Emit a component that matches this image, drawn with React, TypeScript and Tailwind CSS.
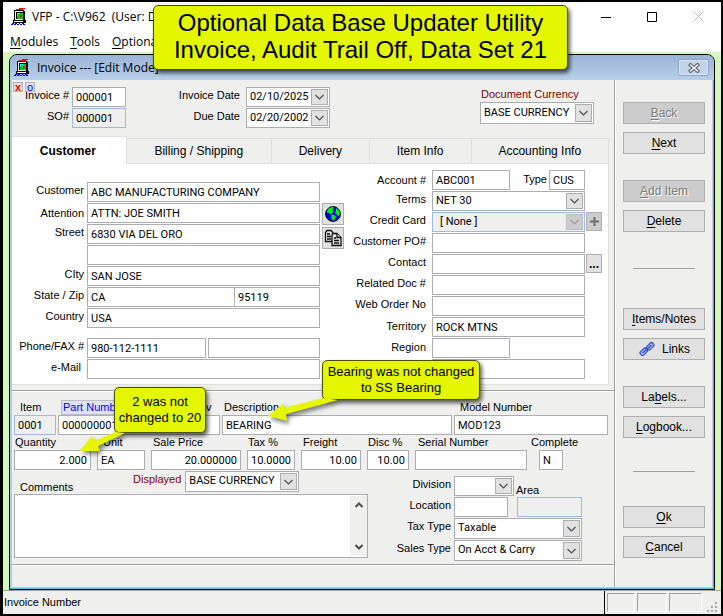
import type { ReactNode } from 'react';

const yellow = 'absolute z-20 rounded-[5px] border border-[#4a4f10] bg-[#e4f600] text-center text-black shadow-[2px_3px_4px_rgba(0,0,0,0.65)]';
const box = 'h-5 min-w-0 border border-[#abadb3] bg-white px-[3px] font-[Roboto,sans-serif] text-[11px] text-black outline-none';
const locked = 'h-5 min-w-0 border border-[#9db9e4] bg-[#efefed] px-[3px] font-[Roboto,sans-serif] text-[11px] text-black outline-none';

function AppIcon() {
  return (
    <svg width="16" height="17" viewBox="0 0 16 17" shapeRendering="crispEdges" className="shrink-0">
      <path d="M8 0h6v1H8zM5 1h7v1H5z" fill="#f00" />
      <path d="M3 2h10v1h1v9h1v3H2v-3h1z" fill="#000" />
      <path d="M4 3h8v1H5v8H4zM3 13h9v1H3z" fill="#fff" />
      <rect x="6" y="5" width="6" height="6" fill="#00c800" />
      <path d="M6 5h3v1H7v2H6z" fill="#0ff" />
      <rect x="9" y="7" width="2" height="2" fill="#f00" />
      <path d="M5 11h7v1H5z" fill="#fff" />
      <path d="M1 15h2v1H1zM4 15h2v1H4zM8 15h1v1H8zM11 15h2v1h-2zM0 16h2v1H0zM3 16h2v1H3zM6 16h2v1H6zM9 16h2v1H9zM12 16h2v1h-2z" fill="#00f" />
    </svg>
  );
}

function Chevron({ off = false }: { off?: boolean }) {
  return (
    <span
      className={
        off
          ? 'pointer-events-none absolute inset-y-0.5 right-0.5 flex w-[17px] items-center justify-center border border-[#bfbfbf] bg-[#cccccc] text-[#9a9a9a]'
          : 'pointer-events-none absolute inset-y-0.5 right-0.5 flex w-[17px] items-center justify-center border border-[#adadad] bg-[#e1e1e1] text-[#505050]'
      }
    >
      <svg width="9" height="6" viewBox="0 0 9 6" fill="none" stroke="currentColor" strokeWidth="1.2">
        <path d="M0.5 1l4 4 4-4" />
      </svg>
    </span>
  );
}

type PickProps = { id: string; value: string; className?: string; off?: boolean };

function Pick({ id, value, className = '', off = false }: PickProps) {
  return (
    <div className={'relative min-w-0 ' + className}>
      <select
        id={id}
        disabled={off}
        className={
          off
            ? 'h-full w-full appearance-none border border-[#9db9e4] bg-[#efefed] pl-[7px] font-[Roboto,sans-serif] text-[11px] text-black opacity-100 outline-none'
            : 'h-full w-full appearance-none border border-[#abadb3] bg-white pl-[3px] font-[Roboto,sans-serif] text-[11px] text-black outline-none'
        }
      >
        <option>{value}</option>
      </select>
      <Chevron off={off} />
    </div>
  );
}

type RowProps = { id: string; label: string; labelClass: string; children: ReactNode };

function Row({ id, label, labelClass, children }: RowProps) {
  return (
    <div className="flex h-[21px] items-start">
      <label htmlFor={id} className={'shrink-0 text-right leading-4 whitespace-nowrap ' + labelClass}>
        {label}
      </label>
      {children}
    </div>
  );
}

type FieldProps = { id: string; label: string; value: string; col: string; input?: string; labelClass?: string };

function Field({ id, label, value, col, input = '', labelClass = 'pl-0.5' }: FieldProps) {
  return (
    <div className={'flex min-w-0 flex-col ' + col}>
      <label htmlFor={id} className={'leading-[15px] whitespace-nowrap ' + labelClass}>
        {label}
      </label>
      <input id={id} defaultValue={value} className={box + ' w-full ' + input} />
    </div>
  );
}

type SideProps = { before?: string; hot: string; after: string; off?: boolean; className?: string; icon?: ReactNode };

function SideButton({ before = '', hot, after, off = false, className = '', icon }: SideProps) {
  return (
    <button
      type="button"
      disabled={off}
      className={
        'flex h-[22px] w-full items-center justify-center border text-xs whitespace-nowrap ' +
        (off
          ? 'border-[#b0b0b4] bg-[#cccccc] text-[#7b7b7b] [text-shadow:1px_1px_0_#fff] '
          : 'border-[#adadb2] bg-[#e1e1e1] text-black ') +
        className
      }
    >
      {icon}
      <span>
        {before}
        <span className="underline underline-offset-2">{hot}</span>
        {after}
      </span>
    </button>
  );
}

function TitleBar() {
  return (
    <header className="bg-white font-['Open_Sans',sans-serif] text-xs">
      <div className="flex h-[29px] items-center pr-[17px] pl-2">
        <AppIcon />
        <span className="ml-[5px] flex-1 whitespace-pre">VFP - C:\V962  (User: DO</span>
        <button type="button" aria-label="Minimize" className="mr-9">
          <svg width="10" height="10" viewBox="0 0 10 10" stroke="#000">
            <path d="M0 5.5h10" />
          </svg>
        </button>
        <button type="button" aria-label="Maximize" className="mr-9">
          <svg width="10" height="10" viewBox="0 0 10 10" fill="none" stroke="#000">
            <path d="M0.5 0.5h9v9h-9z" />
          </svg>
        </button>
        <button type="button" aria-label="Close">
          <svg width="11" height="11" viewBox="0 0 11 11" stroke="#bbb">
            <path d="M0.5 0.5l10 10M10.5 0.5l-10 10" />
          </svg>
        </button>
      </div>
      <nav className="flex h-[21px] items-center gap-3 pl-[7px]">
        {['Modules', 'Tools', 'Optional'].map((item) => (
          <button type="button" key={item}>
            <span className="underline underline-offset-2">{item[0]}</span>
            {item.slice(1)}
          </button>
        ))}
      </nav>
    </header>
  );
}

function DocumentHeader() {
  return (
    <div className="relative flex h-14 items-start pt-[7px]">
      <button type="button" className="absolute top-0.5 left-px h-2.5 w-2.5 border border-[#b4b4b8] bg-[#e1e1e1] text-[11px] leading-[7px] font-bold text-red-600">
        x
      </button>
      <button type="button" className="absolute top-0.5 left-[13px] h-2.5 w-2.5 border border-[#b4b4b8] bg-[#e1e1e1] text-[11px] leading-[7px] text-[#0000ff]">
        o
      </button>
      <div>
        <Row id="invoice" label="Invoice #" labelClass="w-[57px] mr-[3px]">
          <input id="invoice" autoFocus defaultValue="000001" className={box + ' w-[54px]'} />
        </Row>
        <Row id="so" label="SO#" labelClass="w-[57px] mr-[3px]">
          <input id="so" readOnly defaultValue="000001" className={locked + ' w-[54px]'} />
        </Row>
      </div>
      <div className="ml-12">
        <Row id="invdate" label="Invoice Date" labelClass="w-[66px] mr-1.5">
          <Pick id="invdate" value="02/10/2025" className="h-5 w-[84px]" />
        </Row>
        <Row id="duedate" label="Due Date" labelClass="w-[66px] mr-1.5">
          <Pick id="duedate" value="02/20/2002" className="h-5 w-[84px]" />
        </Row>
      </div>
      <div className="mr-5 ml-auto flex w-[114px] flex-col">
        <label htmlFor="currency" className="pl-px leading-[15px] whitespace-nowrap text-[#800000]">
          Document Currency
        </label>
        <Pick id="currency" value="BASE CURRENCY" className="h-[22px]" />
      </div>
    </div>
  );
}

function Tabs() {
  const tab = 'h-[26px] min-w-0 border-t border-r border-b border-[#dfdfdf] bg-[#efefed] text-xs whitespace-nowrap';
  return (
    <div role="tablist" className="mr-[5px] flex items-end">
      <button type="button" role="tab" aria-selected="true" className="h-7 min-w-0 flex-[113] border-t border-r border-[#dfdfdf] bg-white pr-0.5 text-xs font-bold">
        Customer
      </button>
      <button type="button" role="tab" aria-selected="false" className={tab + ' flex-[146]'}>Billing / Shipping</button>
      <button type="button" role="tab" aria-selected="false" className={tab + ' flex-[98]'}>Delivery</button>
      <button type="button" role="tab" aria-selected="false" className={tab + ' flex-[102]'}>Item Info</button>
      <button type="button" role="tab" aria-selected="false" className={tab + ' flex-[138]'}>Accounting Info</button>
    </div>
  );
}

function CustomerPanel() {
  const left = 'w-[72px] mr-[3px]';
  const right = 'w-[82px] mr-1.5';
  const small = 'flex items-center justify-center border border-[#adadb2] bg-[#e1e1e1]';
  return (
    <div className="mr-[5px] flex h-[221px] items-start border-r border-b border-[#dfdfdf] bg-white">
      <div className="min-w-0 flex-1 pt-[18px]">
        <Row id="customer" label="Customer" labelClass={left}>
          <input id="customer" defaultValue="ABC MANUFACTURING COMPANY" className={box + ' flex-1'} />
        </Row>
        <Row id="attention" label="Attention" labelClass={left + ' pt-0.5'}>
          <input id="attention" defaultValue="ATTN: JOE SMITH" className={box + ' flex-1'} />
        </Row>
        <Row id="street" label="Street" labelClass={left}>
          <input id="street" defaultValue="6830 VIA DEL ORO" className={box + ' flex-1'} />
        </Row>
        <Row id="street2" label="" labelClass={left}>
          <input id="street2" aria-label="Street line 2" className={box + ' flex-1'} />
        </Row>
        <Row id="city" label="CIty" labelClass={left}>
          <input id="city" defaultValue="SAN JOSE" className={box + ' flex-1'} />
        </Row>
        <Row id="state" label="State / Zip" labelClass={left}>
          <input id="state" defaultValue="CA" className={box + ' flex-1'} />
          <input aria-label="Zip" defaultValue="95119" className={box + ' -ml-px w-[86px]'} />
        </Row>
        <Row id="country" label="Country" labelClass={left}>
          <input id="country" defaultValue="USA" className={box + ' flex-1'} />
        </Row>
        <div className="mt-[9px]">
          <Row id="phone" label="Phone/FAX #" labelClass={left}>
            <input id="phone" defaultValue="980-112-1111" className={box + ' mr-0.5 flex-1'} />
            <input aria-label="Fax" className={box + ' w-28'} />
          </Row>
        </div>
        <Row id="email" label="e-Mail" labelClass={left + ' pr-[3px]'}>
          <input id="email" className={box + ' flex-1'} />
        </Row>
      </div>
      <div className="ml-0.5 flex w-[22px] flex-col gap-0.5 pt-[39px]">
        <button type="button" aria-label="Web site" className={small + ' h-[22px]'}>
          <svg width="16" height="16" viewBox="0 0 16 16">
            <circle cx="8" cy="8" r="7.4" fill="#0000f0" stroke="#000" />
            <path d="M2 5l2-3 4-1.2 1 1.200-2 2 2 1-2 2-1 2-2-2-2-.5zM11 2l3 2.500 1 3.500-1 2-2-1-2-2 1-2zM6 8.500l3 .5 2 1.500-1 2.500-2 2-1.500-3z" fill="#00f000" />
          </svg>
        </button>
        <button type="button" aria-label="Copy" className={small + ' h-[22px]'}>
          <svg width="18" height="18" viewBox="0 0 18 18" fill="#e1e1e1" stroke="#111" strokeWidth="1.3">
            <path d="M3 1.5h4l2 2v9H1.500v-9z" />
            <path d="M3 5h3M3 7.500h4M3 10h4" />
            <path d="M9 4.500h4l4 4v8H8v-11z" />
            <path d="M13 4.500v4h4M10 9h2M10 11.500h5M10 14h5" />
          </svg>
        </button>
      </div>
      <div className="w-[264px] shrink-0 pt-1.5">
        <Row id="account" label="Account #" labelClass={right + ' pt-0.5'}>
          <input id="account" defaultValue="ABC001" className={box + ' w-[78px]'} />
          <label htmlFor="type" className="w-[39px] pr-0.5 text-right leading-[18px]">Type</label>
          <input id="type" defaultValue="CUS" className={box + ' w-9'} />
        </Row>
        <Row id="terms" label="Terms" labelClass={right}>
          <Pick id="terms" value="NET 30" className="h-5 w-[153px]" />
        </Row>
        <Row id="card" label="Credit Card" labelClass={right}>
          <Pick id="card" value="[ None ]" off className="h-5 w-[153px]" />
          <button type="button" aria-label="Add card" className="ml-px flex h-[19px] w-4 items-center justify-center border border-[#b0b0b4] bg-[#cccccc]">
            <svg width="9" height="9" viewBox="0 0 9 9" stroke="#6d6d6d" strokeWidth="2">
              <path d="M4.500 0v9M0 4.500h9" />
            </svg>
          </button>
        </Row>
        <Row id="po" label="Customer PO#" labelClass={right}>
          <input id="po" className={box + ' w-[153px]'} />
        </Row>
        <Row id="contact" label="Contact" labelClass={right}>
          <input id="contact" className={box + ' w-[153px]'} />
          <button type="button" className="ml-px h-[19px] w-4 border border-[#adadb2] bg-[#e1e1e1] text-xs leading-4 font-bold">...</button>
        </Row>
        <Row id="related" label="Related Doc #" labelClass={right}>
          <input id="related" className={box + ' w-[153px]'} />
        </Row>
        <Row id="web" label="Web Order No" labelClass={right}>
          <input id="web" className={box + ' w-[153px]'} />
        </Row>
        <Row id="territory" label="Territory" labelClass={right + ' pt-px'}>
          <input id="territory" defaultValue="ROCK MTNS" className={box + ' w-[153px]'} />
        </Row>
        <Row id="region" label="Region" labelClass={right + ' pt-px'}>
          <input id="region" className={box + ' w-[78px]'} />
        </Row>
        <Row id="region2" label="" labelClass={right}>
          <input id="region2" aria-label="Region name" className={box + ' w-[153px]'} />
        </Row>
      </div>
    </div>
  );
}

function LineItem() {
  return (
    <div className="pr-1.5 pl-0.5">
      <div className="flex gap-0.5 pt-2">
        <div className="flex w-[42px] shrink-0 flex-col">
          <label htmlFor="item" className="pl-1.5 leading-[15px]">Item</label>
          <input id="item" readOnly defaultValue="0001" className={locked + ' w-full'} />
        </div>
        <div className="flex w-[126px] shrink-0 flex-col">
          <label htmlFor="part" className="ml-[3px] h-[15px] w-[66px] border border-[#b8bccb] bg-[#dfe3ee] pl-px leading-[13px] whitespace-nowrap text-[#0000ff]">
            Part Number
          </label>
          <input id="part" defaultValue="000000001" className={box + ' w-full'} />
        </div>
        <Field id="rev" label="Rev" value="" col="w-[34px] shrink-0" labelClass="pl-1.5" />
        <Field id="desc" label="Description" value="BEARING" col="flex-[230]" />
        <Field id="model" label="Model Number" value="MOD123" col="flex-[154]" labelClass="pl-1.5" />
      </div>
      <div className="flex gap-1.5">
        <Field id="qty" label="Quantity" value="2.000" col="w-[77px]" input="text-right" labelClass="pl-px" />
        <Field id="unit" label="Unit" value="EA" col="w-12" labelClass="pl-1.5" />
        <Field id="price" label="Sale Price" value="20.000000" col="w-[90px]" input="text-right" />
        <Field id="tax" label="Tax %" value="10.0000" col="w-12" input="text-right" labelClass="pl-px" />
        <Field id="freight" label="Freight" value="10.00" col="w-[60px]" input="text-right" />
        <Field id="disc" label="Disc %" value="10.00" col="w-[42px]" input="text-right" labelClass="pl-px" />
        <Field id="serial" label="Serial Number" value="" col="w-28" labelClass="pl-[3px]" />
        <div className="-ml-0.5 flex w-12 flex-col">
          <label htmlFor="complete" className="leading-[15px]">Complete</label>
          <input id="complete" defaultValue="N" className={box + ' ml-2 w-6'} />
        </div>
      </div>
    </div>
  );
}

function Footer() {
  const label = 'w-14 mr-[3px]';
  return (
    <div className="flex items-start pr-8 pb-[3px] pl-0.5">
      <div className="min-w-0 flex-1 pt-px">
        <div className="flex h-[23px] items-start">
          <label htmlFor="comments" className="w-[119px] pt-2 pl-1.5 leading-4">Comments</label>
          <label htmlFor="displayed" className="mr-1 leading-4 text-[#800000]">Displayed</label>
          <Pick id="displayed" value="BASE CURRENCY" className="h-[21px] w-[114px]" />
        </div>
        <div className="flex h-16 border border-[#abadb3] bg-white">
          <textarea id="comments" className="min-w-0 flex-1 resize-none px-1 outline-none" />
          <div className="my-px flex w-[17px] flex-col items-center justify-between bg-[#efefed] py-1.5 text-[#505050]">
            <svg width="8" height="6" viewBox="0 0 8 6" fill="none" stroke="currentColor" strokeWidth="2">
              <path d="M0.500 5l3.500-3.500 3.500 3.500" />
            </svg>
            <svg width="8" height="6" viewBox="0 0 8 6" fill="none" stroke="currentColor" strokeWidth="2">
              <path d="M0.500 1l3.500 3.500 3.500-3.500" />
            </svg>
          </div>
        </div>
      </div>
      <div className="ml-[27px] w-[187px] shrink-0 pt-1.5">
        <Row id="division" label="Division" labelClass={label}>
          <Pick id="division" value="" className="h-5 w-[60px]" />
          <label htmlFor="area" className="ml-0.5 pt-1.5 leading-4">Area</label>
        </Row>
        <Row id="location" label="Location" labelClass={label}>
          <input id="location" className={box + ' w-[54px]'} />
          <input id="area" readOnly className={locked + ' ml-[9px] flex-1'} />
        </Row>
        <Row id="taxtype" label="Tax Type" labelClass={label}>
          <Pick id="taxtype" value="Taxable" className="h-[21px] flex-1" />
        </Row>
        <div className="mt-px">
          <Row id="saletype" label="Sales Type" labelClass={label}>
            <Pick id="saletype" value="On Acct & Carry" className="h-[21px] flex-1" />
          </Row>
        </div>
      </div>
    </div>
  );
}

function SidePanel() {
  const links = (
    <svg width="18" height="17" viewBox="0 0 18 17" fill="none" className="mr-1.5">
      <g stroke="#3a55c4" strokeWidth="6" strokeLinecap="round">
        <path d="M4.500 12l2.500-2.500M11 6.500l2.500-2.500" />
      </g>
      <g stroke="#a9bcf6" strokeWidth="3.500" strokeLinecap="round">
        <path d="M4.500 12l2.500-2.500M11 6.500l2.500-2.500" />
      </g>
      <path d="M4.500 12l9-8" stroke="#3a55c4" strokeWidth="1.500" />
    </svg>
  );
  const rule = 'mx-2.5 border-t border-[#a0a0a0]';
  return (
    <aside className="w-[97px] shrink-0 border-l border-white pt-[22px] pr-[7px] pl-[7px]">
      <SideButton hot="B" after="ack" off />
      <SideButton hot="N" after="ext" className="mt-2" />
      <SideButton hot="A" after="dd Item" off className="mt-[26px]" />
      <SideButton hot="D" after="elete" className="mt-2" />
      <hr className={rule + ' mt-9 mb-[39px]'} />
      <SideButton hot="I" after="tems/Notes" />
      <SideButton hot="" after="Links" icon={links} className="mt-2" />
      <SideButton before="La" hot="b" after="els..." className="mt-[26px]" />
      <SideButton hot="L" after="ogbook..." className="mt-2" />
      <hr className={rule + ' mt-[33px] mb-[34px]'} />
      <SideButton hot="O" after="k" />
      <SideButton hot="C" after="ancel" className="mt-2" />
    </aside>
  );
}

function InvoiceWindow() {
  return (
    <section className="flex min-w-0 flex-1 flex-col overflow-hidden rounded-t-lg border border-black bg-[#b4cbe8]">
      <div className="flex h-[25px] items-center bg-linear-to-b from-[#9ab4d6] to-[#b9cfea] pr-[5px] pl-1 font-['Open_Sans',sans-serif] text-xs">
        <AppIcon />
        <span className="ml-[7px] flex-1">Invoice --- [Edit Mode]</span>
        <button type="button" aria-label="Close invoice" className="flex h-[17px] w-[31px] items-center justify-center rounded-[2px] border border-[#8ea4c2] bg-[#c3d4ea] shadow-[inset_0_0_0_1px_#dbe6f4]">
          <svg width="12" height="10" viewBox="0 0 12 10" strokeLinecap="square">
            <path d="M2.500 2l7 6M9.500 2l-7 6" stroke="#555b66" strokeWidth="3.500" />
            <path d="M2.500 2l7 6M9.500 2l-7 6" stroke="#fff" strokeWidth="1.500" />
          </svg>
        </button>
      </div>
      <div className="flex min-w-0 flex-1 border-r border-b border-[#45c3de]">
        <div className="mr-px mb-px ml-0.5 flex min-w-0 flex-1 bg-[#efefed]">
          <main className="flex min-w-0 flex-1 flex-col border-r border-[#a0a0a0]">
            <DocumentHeader />
            <Tabs />
            <CustomerPanel />
            <div className="mt-[5px] border-t border-b border-t-[#a0a0a0] border-b-white" />
            <LineItem />
            <Footer />
            <div className="border-t border-b border-t-[#a0a0a0] border-b-white" />
          </main>
          <SidePanel />
        </div>
      </div>
    </section>
  );
}

function StatusBar() {
  const pane = 'h-[19px] border border-t-[#a0a0a0] border-r-white border-b-white border-l-[#a0a0a0]';
  return (
    <footer className="flex h-6 items-center border-t border-[#a0a0a0] bg-[#efefed]">
      <span className="flex-1 pl-px">Invoice Number</span>
      <div className="flex h-full items-center gap-0.5 border-l border-black pl-0.5">
        <span className={pane + ' w-7'} />
        <span className={pane + ' w-[30px]'} />
        <span className={pane + ' w-[33px]'} />
      </div>
      <svg width="19" height="20" viewBox="0 0 19 20" fill="#a8a8ac">
        <path d="M13 9h2v2h-2zM9 13h2v2h-2zM13 13h2v2h-2zM5 17h2v2h-2zM9 17h2v2h-2zM13 17h2v2h-2z" />
      </svg>
    </footer>
  );
}

function Notes() {
  return (
    <>
      <div className={yellow + ' top-[3px] left-[150px] h-[65px] w-[415px] pt-[3px] text-2xl leading-[27px] whitespace-nowrap'}>
        Optional Data Base Updater Utility
        <br />
        Invoice, Audit Trail Off, Data Set 21
      </div>
      <div className={yellow + ' top-[385px] left-[111px] h-[46px] w-[92px] pt-1.5 text-[13px] leading-4 whitespace-nowrap'}>
        2 was not
        <br />
        changed to 20
      </div>
      <div className={yellow + ' top-[358px] left-[319px] h-10 w-[158px] pt-[3px] text-[13px] leading-4 whitespace-nowrap'}>
        Bearing was not changed
        <br />
        to SS Bearing
      </div>
      <svg width="270" height="60" viewBox="75 395 270 60" className="pointer-events-none absolute top-[393px] left-[72px] z-30 drop-shadow-[2px_3px_2px_rgba(0,0,0,0.5)]">
        <path d="M80 451L92 436L95 441L115 432L125 433L98 446L100 451Z" fill="#e4f600" />
        <path d="M268 416L284 403L284 408L323 398L338 400L286 414L287 421Z" fill="#e4f600" />
      </svg>
    </>
  );
}

export default function App() {
  return (
    <div className="relative flex min-h-screen flex-col border-y-2 border-r-2 border-l-[3px] border-black bg-[#d3f8bd] font-['Liberation_Sans',Arial,sans-serif] text-[11px] text-black">
      <TitleBar />
      <div className="flex min-w-0 flex-1 flex-col px-1.5 pt-0.5">
        <InvoiceWindow />
      </div>
      <StatusBar />
      <Notes />
    </div>
  );
}
